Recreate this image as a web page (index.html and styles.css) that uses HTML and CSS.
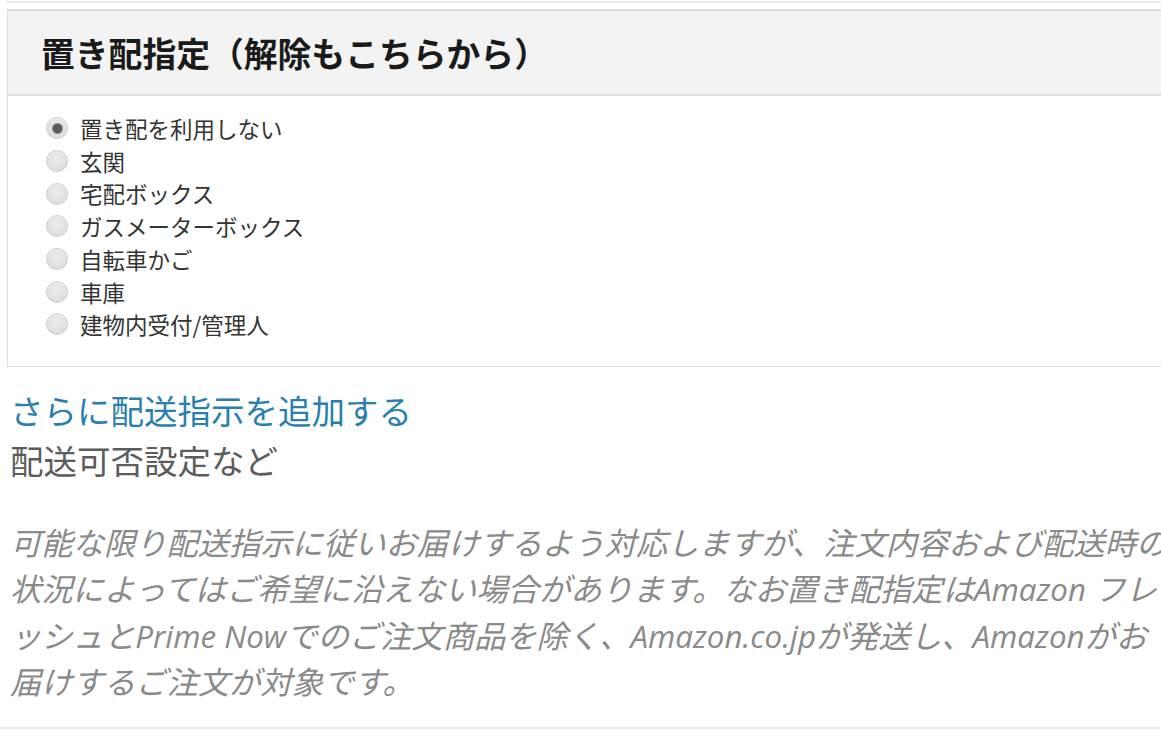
FILE: index.html
```html
<!DOCTYPE html>
<html lang="ja">
<head>
<meta charset="utf-8">
<title>置き配指定</title>
<link rel="stylesheet" href="styles.css">
</head>
<body>
<div class="page">
  <div class="prev-box"></div>
  <section class="box">
    <header class="box-head">
      <h2 class="box-title">置き配指定（解除もこちらから）</h2>
    </header>
    <div class="box-body">
      <ul class="radio-list">
        <li class="radio-row"><span class="radio checked"></span><span class="radio-label">置き配を利用しない</span></li>
        <li class="radio-row"><span class="radio"></span><span class="radio-label">玄関</span></li>
        <li class="radio-row"><span class="radio"></span><span class="radio-label">宅配ボックス</span></li>
        <li class="radio-row"><span class="radio"></span><span class="radio-label">ガスメーターボックス</span></li>
        <li class="radio-row"><span class="radio"></span><span class="radio-label">自転車かご</span></li>
        <li class="radio-row"><span class="radio"></span><span class="radio-label">車庫</span></li>
        <li class="radio-row"><span class="radio"></span><span class="radio-label">建物内受付/管理人</span></li>
      </ul>
    </div>
  </section>
  <div class="more">
    <a class="more-link" href="#">さらに配送指示を追加する</a>
    <div class="more-sub">配送可否設定など</div>
  </div>
  <p class="note">可能な限り配送指示に従いお届けするよう対応しますが、注文内容および配送時の<br>状況によってはご希望に沿えない場合があります。なお置き配指定はAmazon フレ<br>ッシュとPrime Nowでのご注文商品を除く、Amazon.co.jpが発送し、Amazonがお<br>届けするご注文が対象です。</p>
  <div class="next-box"></div>
</div>
</body>
</html>
```
FILE: styles.css
```css
html, body {
  margin: 0;
  padding: 0;
  background: #fff;
  overflow: hidden;
}
body {
  font-family: "Noto Sans CJK JP", "Open Sans", sans-serif;
  width: 1161px;
  height: 732px;
  text-spacing-trim: space-all;
}
.page {
  width: 1240px;
}
.prev-box {
  height: 1px;
  margin-left: 7px;
  border-left: 1px solid #dcdcdc;
  border-bottom: 2px solid #ececec;
}
.box {
  margin: 6px 0 0 7px;
  border: 1px solid #dddddd;
  border-top-width: 2px;
  border-top-color: #dcdcdc;
}
.box-head {
  background: #f3f3f3;
  border-bottom: 2px solid #e0e0e0;
  height: 83px;
  display: flex;
  align-items: center;
  padding-left: 33px;
}
.box-title {
  margin: 0;
  font-size: 33.8px;
  font-weight: 700;
  color: #1a1a1a;
  line-height: 1;
}
.box-body {
  padding: 16px 0 25px 38px;
}
.radio-list {
  list-style: none;
  margin: 0;
  padding: 0;
}
.radio-row {
  display: flex;
  align-items: center;
  height: 32.7px;
  gap: 12px;
}
.radio {
  width: 20px;
  height: 20px;
  border-radius: 50%;
  border: 1px solid #cfcfcf;
  background: radial-gradient(circle at 50% 40%, #ececec 0%, #dedede 70%, #d4d4d4 100%);
  box-shadow: inset 0 1px 1px rgba(255,255,255,0.6);
  display: flex;
  align-items: center;
  justify-content: center;
  flex: none;
}
.radio.checked::after {
  content: "";
  width: 9px;
  height: 9px;
  border-radius: 50%;
  background: #5a5a5a;
  box-shadow: 0 0 0 1px #8a8a8a;
}
.radio-label {
  font-size: 22.5px;
  color: #333;
  line-height: 1;
}
.more {
  padding: 18px 0 0 10px;
  display: flex;
  flex-direction: column;
}
.more-link {
  font-size: 33.5px;
  line-height: 50px;
  color: #2a7fae;
  text-decoration: none;
}
.more-sub {
  font-size: 33.5px;
  line-height: 50px;
  color: #5c5c5c;
}
.note {
  margin: 35px 0 0 10px;
  font-size: 31.3px;
  line-height: 46.5px;
  font-style: italic;
  color: #8a8a8a;
  white-space: nowrap;
  font-family: "Open Sans", "Noto Sans CJK JP", sans-serif;
}
.next-box {
  margin-top: 21px;
  border-top: 2px solid #ebebeb;
}
```
